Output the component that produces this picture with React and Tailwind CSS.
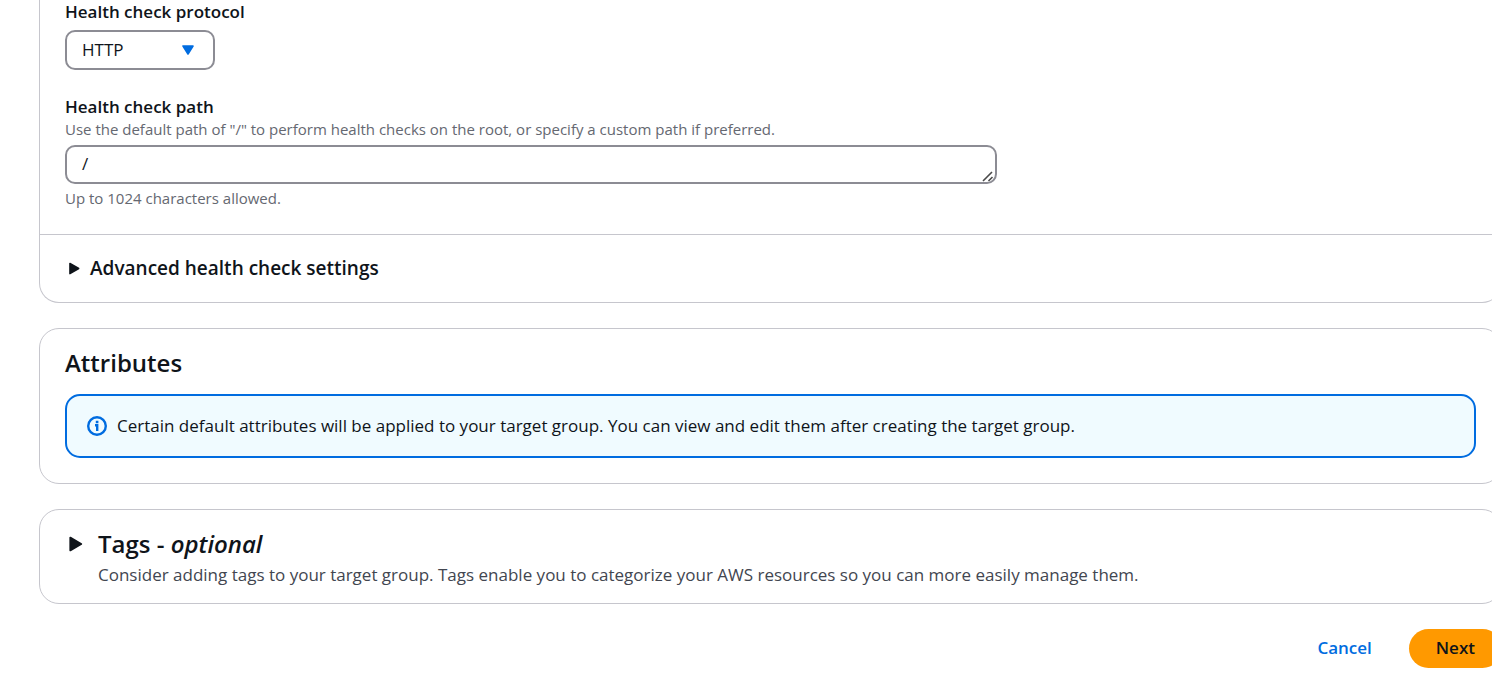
import React from "react";

function Caret({ className, direction = "right" }) {
  return (
    <svg viewBox="0 0 12 14" className={className} aria-hidden="true" fill="currentColor" stroke="currentColor" strokeWidth="1.6" strokeLinejoin="round">
      {direction === "right" ? <path d="M1 1.4 L10.6 7 L1 12.6 Z" /> : <path d="M1 3 H11 L6 11 Z" />}
    </svg>
  );
}

function InfoIcon() {
  return (
    <svg viewBox="0 0 20 20" className="size-5 shrink-0 text-[#006ce0]" aria-hidden="true" fill="none" stroke="currentColor" strokeWidth="2.4">
      <circle cx="10" cy="10" r="8.8" />
      <path d="M10.2 15V9.2H8M8.8 6H11.4" strokeWidth="2.4" />
    </svg>
  );
}

function HealthCheckCard() {
  return (
    <section className="rounded-b-[20px] border border-t-0 border-[#c6c6cd]">
      <div className="px-[25px] pb-[27px]">
        <div>
          <label htmlFor="protocol" className="block text-[17px] leading-6 font-semibold">
            Health check protocol
          </label>
          <div className="relative mt-[6px] w-[150px]">
            <select
              id="protocol"
              defaultValue="HTTP"
              className="block h-10 w-full appearance-none rounded-[10px] border-2 border-[#8c8c94] bg-white px-[15px] text-[17px]"
            >
              <option>HTTP</option>
              <option>HTTPS</option>
            </select>
            <Caret direction="down" className="pointer-events-none absolute top-[13px] right-5 h-[14px] w-[14px] text-[#006ce0]" />
          </div>
        </div>

        <div className="mt-[25px] grid grid-cols-3 gap-[25px]">
          <div className="col-span-2">
            <label htmlFor="path" className="block text-[17px] leading-6 font-semibold">
              Health check path
            </label>
            <p id="path-hint" className="mt-[1px] text-[15px] leading-[18px] text-[#656871]">
              Use the default path of "/" to perform health checks on the root, or specify a custom path if preferred.
            </p>
            <div className="relative mt-[7px]">
              <textarea
                id="path"
                rows={1}
                defaultValue="/"
                aria-describedby="path-hint"
                className="block h-[39px] w-full resize-none overflow-hidden rounded-[10px] border-2 border-[#8c8c94] px-[15px] py-[5px] text-[17px] leading-6"
              />
              <svg viewBox="0 0 12 12" className="pointer-events-none absolute right-[3px] bottom-[2px] size-3" aria-hidden="true" fill="none" stroke="#4a4a4a" strokeWidth="1.6">
                <path d="M1 11 L10 2 M6.5 11 L10.5 7" />
              </svg>
            </div>
            <p className="mt-[5px] text-[15px] leading-[18px] text-[#656871]">Up to 1024 characters allowed.</p>
          </div>
        </div>
      </div>
      <div className="border-t border-[#c6c6cd] px-[25px] py-5">
        <button type="button" aria-expanded="false" className="flex items-center gap-[10px] px-1 text-[19px] leading-[27px] font-semibold">
          <Caret className="h-[13px] w-[11px]" />
          Advanced health check settings
        </button>
      </div>
    </section>
  );
}

function AttributesCard() {
  return (
    <section className="rounded-[20px] border border-[#c6c6cd] px-[25px] pt-[19px] pb-[25px]">
      <h2 className="text-2xl leading-[30px] font-semibold">Attributes</h2>
      <div className="mt-4 flex items-center gap-[10px] rounded-[15px] border-2 border-[#006ce0] bg-[#f0fbff] px-5 py-[18px]">
        <InfoIcon />
        <p className="text-[17px] leading-6">
          Certain default attributes will be applied to your target group. You can view and edit them after creating the target group.
        </p>
      </div>
    </section>
  );
}

function TagsCard() {
  return (
    <section className="rounded-[20px] border border-[#c6c6cd] px-[25px] pt-[19px] pb-4">
      <h2>
        <button type="button" aria-expanded="false" className="flex items-center gap-[15px] pl-1 text-2xl leading-[30px] font-semibold">
          <Caret className="h-4 w-[14px]" />
          <span>
            Tags - <i>optional</i>
          </span>
        </button>
      </h2>
      <p className="mt-1 pl-[33px] text-[17px] leading-6 text-[#424650]">
        Consider adding tags to your target group. Tags enable you to categorize your AWS resources so you can more easily manage them.
      </p>
    </section>
  );
}

export default function App() {
  return (
    <div className="overflow-x-hidden bg-white pb-[11px] font-['Open_Sans','Noto_Sans',sans-serif] text-[#0f141a]">
      <main className="-mr-[10px] ml-[39px] flex flex-col gap-[25px]">
        <HealthCheckCard />
        <AttributesCard />
        <TagsCard />
        <div className="flex justify-end gap-[10px] text-[17px] font-semibold">
          <a href="#cancel" className="rounded-full px-[27px] pt-[6px] pb-2 leading-[25px] text-[#006ce0]">
            Cancel
          </a>
          <button type="button" className="rounded-full bg-[#ff9900] px-[27px] pt-[6px] pb-2 leading-[25px]">
            Next
          </button>
        </div>
      </main>
    </div>
  );
}
